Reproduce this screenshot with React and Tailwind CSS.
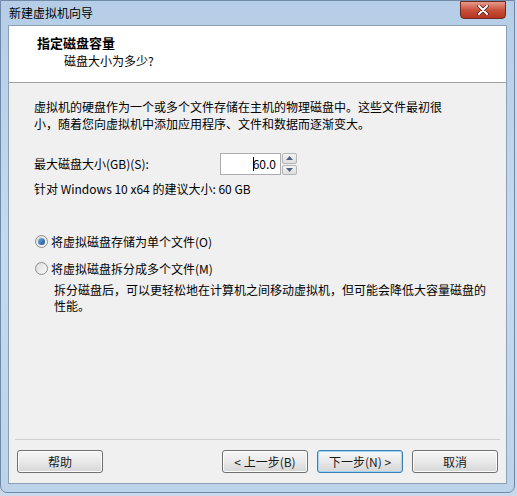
import React from "react";

const font = { fontFamily: '"Noto Sans CJK SC", "Liberation Sans", sans-serif' };

function WinButton({ children, focused }) {
  return (
    <button
      className={
        "h-[23px] w-[86px] rounded-[3px] border text-[12px] leading-none text-[#1a1a1a] bg-gradient-to-b from-[#f6f6f6] via-[#e9e9e9] to-[#d6d6d6] " +
        (focused ? "border-[#3c7fb1] shadow-[inset_0_0_0_1px_#9fd5f4]" : "border-[#707070] shadow-[inset_0_0_0_1px_#fcfcfc]")
      }
    >
      {children}
    </button>
  );
}

function Radio({ checked }) {
  return (
    <span className="relative inline-flex h-[13px] w-[13px] items-center justify-center rounded-full border border-[#8e8f8f] bg-gradient-to-br from-[#dcdcdc] to-[#fbfbfb]">
      {checked && <span className="h-[7px] w-[7px] rounded-full bg-gradient-to-br from-[#7ab0e4] to-[#1b4d8c]" />}
    </span>
  );
}

export default function App() {
  return (
    <div style={font} className="w-[517px] h-[496px] bg-[#c9d9ea] overflow-hidden">
      <div className="relative h-[493px] w-[515px] rounded-b-[7px] border border-[#6f89a8] bg-gradient-to-b from-[#b5cde6] via-[#c6daef] to-[#bcd3ea] px-[7px] flex flex-col">
        {/* title bar */}
        <div className="h-[24px] flex items-center text-[12px] text-black pl-[1px]">
          新建虚拟机向导
        </div>
        <div className="absolute right-[8px] top-0 h-[18px] w-[46px] rounded-b-[4px] border border-[#6b2a22] bg-gradient-to-b from-[#e69a8b] via-[#c9503b] to-[#b3331f] flex items-center justify-center">
          <svg width="12" height="10" viewBox="0 0 12 10">
            <path d="M2 1 L10 9 M10 1 L2 9" stroke="#4a1a12" strokeWidth="3.4" strokeLinecap="round" />
            <path d="M2 1 L10 9 M10 1 L2 9" stroke="#ffffff" strokeWidth="2" strokeLinecap="round" />
          </svg>
        </div>

        {/* client area */}
        <div className="flex-1 border border-[#8aa0b8] bg-[#f0f0f0] flex flex-col mb-[8px]">
          <div className="h-[57px] bg-white border-b border-[#a0a0a0] pt-[8px] pl-[28px]">
            <div className="text-[13px] font-bold leading-[18px] text-black">指定磁盘容量</div>
            <div className="text-[12px] leading-[18px] text-black pl-[27px]">磁盘大小为多少?</div>
          </div>

          <div className="flex-1 pl-[25px] pt-[15px] text-[12px] text-black">
            <div className="leading-[17px]">
              虚拟机的硬盘作为一个或多个文件存储在主机的物理磁盘中。这些文件最初很
              <br />
              小，随着您向虚拟机中添加应用程序、文件和数据而逐渐变大。
            </div>

            <div className="mt-[20px] flex items-center h-[24px]">
              <span className="w-[186px]">最大磁盘大小(GB)(S):</span>
              <div className="flex items-center">
                <div className="h-[22px] w-[61px] border border-[#abadb3] bg-white flex items-center justify-end pr-[4px]">
                  <span className="w-[1px] h-[14px] bg-black mr-[-1px]" />
                  60.0
                </div>
                <div className="ml-[1px] flex flex-col h-[22px] w-[15px] gap-[1px]">
                  <div className="flex-1 border border-[#b5b5b5] rounded-[2px] bg-gradient-to-b from-[#f4f4f4] to-[#dedede] flex items-center justify-center">
                    <svg width="7" height="4" viewBox="0 0 7 4"><path d="M0 4 L3.5 0 L7 4Z" fill="#4d6185" /></svg>
                  </div>
                  <div className="flex-1 border border-[#b5b5b5] rounded-[2px] bg-gradient-to-b from-[#f4f4f4] to-[#dedede] flex items-center justify-center">
                    <svg width="7" height="4" viewBox="0 0 7 4"><path d="M0 0 L3.5 4 L7 0Z" fill="#4d6185" /></svg>
                  </div>
                </div>
              </div>
            </div>
            <div className="mt-[4px] leading-[17px]">针对 Windows 10 x64 的建议大小: 60 GB</div>

            <div className="mt-[36px] flex items-center gap-[3px] pl-[1px] h-[17px]">
              <Radio checked />
              <span>将虚拟磁盘存储为单个文件(O)</span>
            </div>
            <div className="mt-[10px] flex items-center gap-[3px] pl-[1px] h-[17px]">
              <Radio />
              <span>将虚拟磁盘拆分成多个文件(M)</span>
            </div>
            <div className="mt-[5px] pl-[20px] leading-[16px]">
              拆分磁盘后，可以更轻松地在计算机之间移动虚拟机，但可能会降低大容量磁盘的
              <br />
              性能。
            </div>
          </div>

          <div className="mx-[6px] border-t border-[#d0d0d0]" />
          <div className="h-[43px] flex items-center px-[8px]">
            <WinButton>帮助</WinButton>
            <div className="flex-1" />
            <div className="flex gap-[9px]">
              <WinButton>&lt; 上一步(B)</WinButton>
              <WinButton focused>下一步(N) &gt;</WinButton>
              <WinButton>取消</WinButton>
            </div>
          </div>
        </div>
      </div>
    </div>
  );
}
